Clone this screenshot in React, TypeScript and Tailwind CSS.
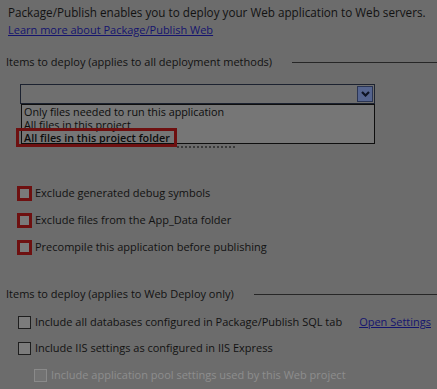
import { ReactNode } from "react";

function RedCheck({ label }: { label: string }) {
    return (
        <div className="flex items-center h-[18px] ml-[9px]">
            <span className="w-[15px] h-[15px] border-[3px] border-[#6e1010] bg-[#7a7a7a] box-border" />
            <span className="ml-[3px]">{label}</span>
        </div>
    );
}

function Check({ children, disabled }: { children: ReactNode; disabled?: boolean }) {
    return (
        <div className={`flex items-center h-[18px] ${disabled ? "ml-[26px] text-[#8e8e8e]" : "ml-[10px]"}`}>
            <span
                className={`w-[13px] h-[13px] border box-border ${
                    disabled ? "border-[#8a8a8a] bg-[#737373]" : "border-[#1e1e1e] bg-[#7c7c7c]"
                }`}
            />
            <span className="ml-[4px] flex-1 flex items-center">{children}</span>
        </div>
    );
}

function GroupHeader({ title }: { title: string }) {
    return (
        <div className="flex items-center h-[18px] -ml-[2px]">
            <span>{title}</span>
            <span className="flex-1 ml-[20px] border-t border-[#262626]" />
        </div>
    );
}

export default function App() {
    return (
        <div
            className="w-[437px] h-[389px] overflow-hidden whitespace-nowrap bg-[#6c6c6c] text-[#121212] text-[11px] leading-[18px] pl-[8px] pt-[3px]"
            style={{ fontFamily: '"Open Sans", "Noto Sans", sans-serif' }}
        >
            <div className="text-[11.7px]">Package/Publish enables you to deploy your Web application to Web servers.</div>
            <div className="text-[#14146e] underline">Learn more about Package/Publish Web</div>

            <div className="mt-[14px] -mr-[8px]">
                <GroupHeader title="Items to deploy (applies to all deployment methods)" />
            </div>

            {/* deployment dropdown, shown open */}
            <div className="relative ml-[12px] mt-[13px] w-[355px] h-[20px] border border-[#1c2230] bg-[#6f6f6f] flex justify-end items-center pr-[1px]">
                <span className="w-[16px] h-[16px] bg-[#55648e] border border-[#2b3552] flex items-center justify-center">
                    <svg width="9" height="6" viewBox="0 0 9 6">
                        <path d="M1 1 L4.5 4.5 L8 1" stroke="#0e1424" strokeWidth="2.2" fill="none" />
                    </svg>
                </span>

                <div className="absolute left-0 top-[19px] w-[354px] h-[40px] border border-[#0e0e0e] bg-[#767676] text-[#0c0c0c] text-[10.8px] leading-[13px] pl-[2px]">
                    <div>Only files needed to run this application</div>
                    <div>All files in this project</div>
                    <div className="font-semibold">All files in this project folder</div>
                </div>

                <div className="absolute left-[-5px] top-[43px] w-[161px] h-[19px] border-[3px] border-[#6e1010]" />
                <div className="absolute left-[156px] top-[61px] w-[58px] h-[2px] border-t-2 border-dotted border-[#3a3a3a]" />
            </div>

            <div className="mt-[80px] flex flex-col gap-[9px]">
                <RedCheck label="Exclude generated debug symbols" />
                <RedCheck label="Exclude files from the App_Data folder" />
                <RedCheck label="Precompile this application before publishing" />
            </div>

            <div className="mt-[29px] -mr-[8px]">
                <GroupHeader title="Items to deploy (applies to Web Deploy only)" />
            </div>

            <div className="mt-[10px] flex flex-col gap-[8px]">
                <Check>
                    <span>Include all databases configured in Package/Publish SQL tab</span>
                    <span className="ml-auto mr-[6px] text-[#14146e] underline">Open Settings</span>
                </Check>
                <Check>Include IIS settings as configured in IIS Express</Check>
                <div className="mt-[1px]">
                    <Check disabled>Include application pool settings used by this Web project</Check>
                </div>
            </div>
        </div>
    );
}
